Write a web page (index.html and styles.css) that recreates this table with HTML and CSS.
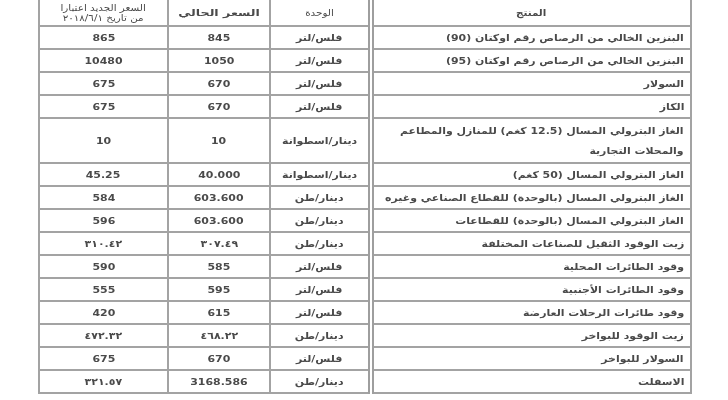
FILE: index.html
```html
<!DOCTYPE html>
<html lang="ar">
<head>
<meta charset="utf-8">
<link rel="stylesheet" href="styles.css">
</head>
<body>
<div class="sheet">
<table class="prices" dir="rtl">
  <colgroup>
    <col class="c-prod"><col class="c-unit"><col class="c-cur"><col class="c-new">
  </colgroup>
  <thead>
    <tr class="head">
      <th class="prod-h"><span class="t">المنتج</span></th>
      <th><span class="t">الوحدة</span></th>
      <th><span class="t wide">السعر الحالي</span></th>
      <th><span class="t">السعر الجديد اعتبارا<br>من تاريخ ٢٠١٨/٦/١</span></th>
    </tr>
  </thead>
  <tbody>
    <tr><td class="prod"><span class="t">البنزين الخالي من الرصاص رقم اوكتان (90)</span></td><td><span class="t">فلس/لتر</span></td><td><span class="t">845</span></td><td><span class="t">865</span></td></tr>
    <tr><td class="prod"><span class="t">البنزين الخالي من الرصاص رقم اوكتان (95)</span></td><td><span class="t">فلس/لتر</span></td><td><span class="t">1050</span></td><td><span class="t">10480</span></td></tr>
    <tr><td class="prod"><span class="t">السولار</span></td><td><span class="t">فلس/لتر</span></td><td><span class="t">670</span></td><td><span class="t">675</span></td></tr>
    <tr><td class="prod"><span class="t">الكاز</span></td><td><span class="t">فلس/لتر</span></td><td><span class="t">670</span></td><td><span class="t">675</span></td></tr>
    <tr class="tall"><td class="prod"><span class="t">الغاز البترولي المسال (12.5 كغم) للمنازل والمطاعم<br>والمحلات التجارية</span></td><td><span class="t">دينار/اسطوانة</span></td><td><span class="t">10</span></td><td><span class="t">10</span></td></tr>
    <tr><td class="prod"><span class="t">الغاز البترولي المسال (50 كغم)</span></td><td><span class="t">دينار/اسطوانة</span></td><td><span class="t">40.000</span></td><td><span class="t">45.25</span></td></tr>
    <tr><td class="prod"><span class="t">الغاز البترولي المسال (بالوحدة) للقطاع الصناعي وغيره</span></td><td><span class="t">دينار/طن</span></td><td><span class="t">603.600</span></td><td><span class="t">584</span></td></tr>
    <tr><td class="prod"><span class="t">الغاز البترولي المسال (بالوحدة) للقطاعات</span></td><td><span class="t">دينار/طن</span></td><td><span class="t">603.600</span></td><td><span class="t">596</span></td></tr>
    <tr><td class="prod"><span class="t">زيت الوقود الثقيل للصناعات المختلفة</span></td><td><span class="t">دينار/طن</span></td><td><span class="t">٣٠٧.٤٩</span></td><td><span class="t">٣١٠.٤٢</span></td></tr>
    <tr><td class="prod"><span class="t">وقود الطائرات المحلية</span></td><td><span class="t">فلس/لتر</span></td><td><span class="t">585</span></td><td><span class="t">590</span></td></tr>
    <tr><td class="prod"><span class="t">وقود الطائرات الأجنبية</span></td><td><span class="t">فلس/لتر</span></td><td><span class="t">595</span></td><td><span class="t">555</span></td></tr>
    <tr><td class="prod"><span class="t">وقود طائرات الرحلات العارضة</span></td><td><span class="t">فلس/لتر</span></td><td><span class="t">615</span></td><td><span class="t">420</span></td></tr>
    <tr><td class="prod"><span class="t">زيت الوقود للبواخر</span></td><td><span class="t">دينار/طن</span></td><td><span class="t">٤٦٨.٢٢</span></td><td><span class="t">٤٧٢.٣٢</span></td></tr>
    <tr><td class="prod"><span class="t">السولار للبواخر</span></td><td><span class="t">فلس/لتر</span></td><td><span class="t">670</span></td><td><span class="t">675</span></td></tr>
    <tr><td class="prod"><span class="t">الاسفلت</span></td><td><span class="t">دينار/طن</span></td><td><span class="t">3168.586</span></td><td><span class="t">٣٢١.٥٧</span></td></tr>
  </tbody>
</table>
</div>
</body>
</html>
```

FILE: styles.css
```css
html, body {
  margin: 0;
  padding: 0;
  background: #ffffff;
}

.sheet {
  padding: 0 0 0 38px;
  height: 400px;
  overflow: hidden;
}

.prices {
  width: 652px;
  border-collapse: collapse;
  table-layout: fixed;
  font-family: "DejaVu Sans", "Noto Sans", sans-serif;
  font-size: 9.5px;
  font-weight: bold;
  color: #4a4a4a;
  filter: blur(0.55px);
}

.c-prod { width: 320px; }
.c-unit { width: 101px; }
.c-cur { width: 102px; }
.c-new { width: 129px; }

.prices th,
.prices td {
  border: 2px solid #a3a3a3;
  text-align: center;
  vertical-align: middle;
  padding: 0 4px;
  height: 21px;
  line-height: 11px;
  white-space: nowrap;
}

.t {
  display: inline-block;
  transform: scaleX(1.15);
  transform-origin: center;
}

.prices thead th {
  border-top: none;
  height: 25px;
  font-weight: normal;
  font-size: 9px;
  line-height: 10px;
}

.prices thead .wide {
  font-weight: bold;
  transform: scaleX(1.4);
}

.prices .prod,
.prices .prod-h {
  text-align: right;
  padding-right: 6px;
  border-left: 6px double #9e9e9e;
}

.prices .prod .t {
  transform-origin: right center;
}

.prices .prod-h {
  text-align: center;
  font-weight: bold;
}

.prices tr.tall td {
  height: 43px;
  line-height: 20px;
}
```
